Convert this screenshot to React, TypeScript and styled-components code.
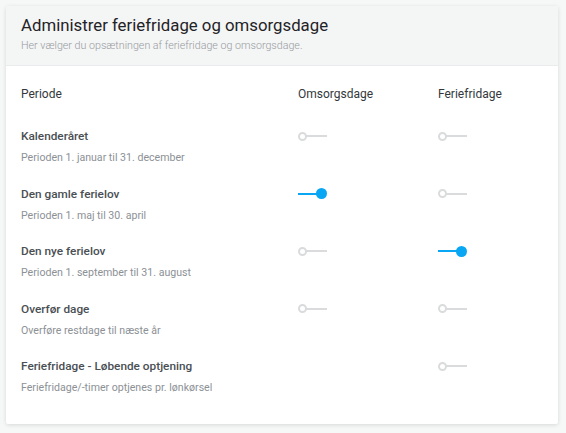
import React from 'react';
import styled, { createGlobalStyle } from 'styled-components';

const GlobalStyle = createGlobalStyle`
  html, body {
    margin: 0;
    padding: 0;
    background: #f6f7f7;
    font-family: Roboto, "Noto Sans", sans-serif;
  }
`;

const Page = styled.div`
  padding: 6px 8px 9px 6px;
`;

const Card = styled.div`
  background: #ffffff;
  box-shadow: 0 1px 4px rgba(0, 0, 0, 0.13);
  border-radius: 2px;
`;

const Header = styled.div`
  background: #f4f5f5;
  border-bottom: 1px solid #e9ebec;
  padding: 9px 15px 12px;
`;

const Title = styled.div`
  font-size: 16.8px;
  line-height: 21px;
  color: #1f2326;
`;

const Subtitle = styled.div`
  margin-top: 3px;
  font-size: 10.7px;
  line-height: 14px;
  color: #979b9f;
  font-weight: 300;
`;

const Body = styled.div`
  padding: 20px 15px 29px;
`;

const Row = styled.div<{ $head?: boolean }>`
  display: grid;
  grid-template-columns: 277px 140px 1fr;
  margin-bottom: ${(p) => (p.$head ? '26px' : '20.6px')};
  &:last-child {
    margin-bottom: 0;
  }
`;

const HeadCell = styled.div`
  font-size: 12px;
  line-height: 16px;
  color: #33383c;
`;

const RowTitle = styled.div`
  font-size: 11.8px;
  line-height: 16px;
  font-weight: 500;
  color: #4a4f54;
`;

const RowSub = styled.div`
  margin-top: 7px;
  font-size: 10.6px;
  line-height: 14px;
  color: #8c9196;
`;

const ToggleCell = styled.div`
  height: 16px;
  display: flex;
  align-items: center;
`;

const Switch = styled.div<{ $on: boolean }>`
  position: relative;
  width: 29px;
  height: 11px;
  &::before {
    content: '';
    position: absolute;
    left: ${(p) => (p.$on ? '0' : '4px')};
    right: ${(p) => (p.$on ? '6px' : '0')};
    top: 4.5px;
    height: 2px;
    background: ${(p) => (p.$on ? '#08a6f3' : '#d9dbdc')};
  }
  &::after {
    content: '';
    position: absolute;
    box-sizing: border-box;
    top: ${(p) => (p.$on ? '0' : '1px')};
    left: ${(p) => (p.$on ? '18px' : '0')};
    width: ${(p) => (p.$on ? '11px' : '9px')};
    height: ${(p) => (p.$on ? '11px' : '9px')};
    border-radius: 50%;
    background: ${(p) => (p.$on ? '#08a6f3' : '#ffffff')};
    border: ${(p) => (p.$on ? 'none' : '2px solid #d9dbdc')};
  }
`;

type Item = {
  title: string;
  sub: string;
  omsorg: boolean | null;
  ferie: boolean | null;
};

const items: Item[] = [
  { title: 'Kalenderåret', sub: 'Perioden 1. januar til 31. december', omsorg: false, ferie: false },
  { title: 'Den gamle ferielov', sub: 'Perioden 1. maj til 30. april', omsorg: true, ferie: false },
  { title: 'Den nye ferielov', sub: 'Perioden 1. september til 31. august', omsorg: false, ferie: true },
  { title: 'Overfør dage', sub: 'Overføre restdage til næste år', omsorg: false, ferie: false },
  { title: 'Feriefridage - Løbende optjening', sub: 'Feriefridage/-timer optjenes pr. lønkørsel', omsorg: null, ferie: false },
];

function Toggle({ value }: { value: boolean | null }) {
  return <ToggleCell>{value !== null && <Switch $on={value} />}</ToggleCell>;
}

export default function App() {
  return (
    <>
      <GlobalStyle />
      <Page>
        <Card>
          <Header>
            <Title>Administrer feriefridage og omsorgsdage</Title>
            <Subtitle>Her vælger du opsætningen af feriefridage og omsorgsdage.</Subtitle>
          </Header>
          <Body>
            <Row $head>
              <HeadCell>Periode</HeadCell>
              <HeadCell>Omsorgsdage</HeadCell>
              <HeadCell>Feriefridage</HeadCell>
            </Row>
            {items.map((it) => (
              <Row key={it.title}>
                <div>
                  <RowTitle>{it.title}</RowTitle>
                  <RowSub>{it.sub}</RowSub>
                </div>
                <Toggle value={it.omsorg} />
                <Toggle value={it.ferie} />
              </Row>
            ))}
          </Body>
        </Card>
      </Page>
    </>
  );
}
